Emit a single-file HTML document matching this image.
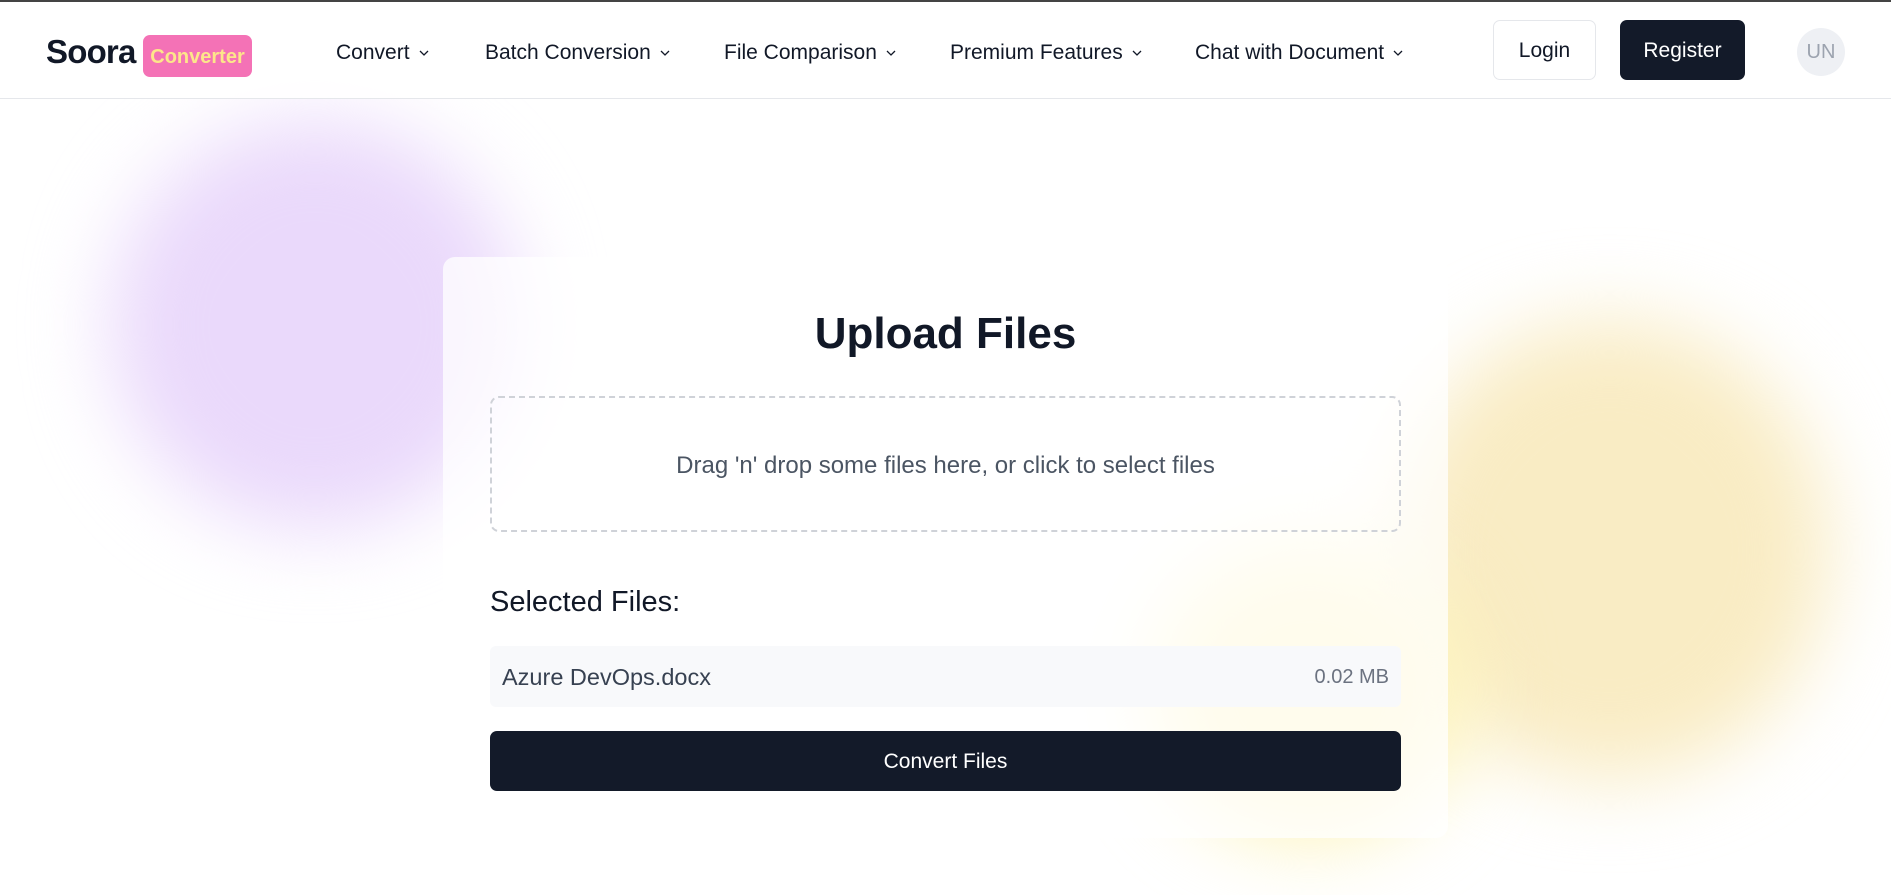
<!DOCTYPE html>
<html><head><meta charset="utf-8"><style>
*{box-sizing:border-box;margin:0;padding:0}
body{width:1891px;height:895px;overflow:hidden;background:#fff;font-family:"Liberation Sans",sans-serif;color:#111827;position:relative}
.topbar{position:absolute;left:0;top:0;width:100%;height:2px;background:#444}
.blob{position:absolute;border-radius:50%;filter:blur(40px)}
header{position:absolute;top:2px;left:0;width:100%;height:97px;border-bottom:1px solid #e5e7eb;background:rgba(255,255,255,.85);z-index:5}
.logo{position:absolute;left:46px;top:31px;font-size:33px;font-weight:bold;color:#111827;letter-spacing:-0.8px}
.badge{position:absolute;left:143px;top:33px;width:109px;height:42px;background:#f472b6;border-radius:7px;color:#fde68a;font-size:20px;font-weight:bold;text-align:center;line-height:44px}
.nav{position:absolute;top:39px;font-size:21px;color:#111827}
.nav svg{vertical-align:middle;margin-left:8px}
.btn{position:absolute;top:18px;height:60px;border-radius:7px;font-size:21px;line-height:62px;text-align:center}
.un{position:absolute;left:1797px;top:26px;width:48px;height:48px;border-radius:50%;background:#eef0f4;color:#9ca3af;font-size:20px;line-height:48px;text-align:center}
.card{position:absolute;left:443px;top:257px;width:1005px;height:581px;background:rgba(255,255,255,.75);border-radius:12px;z-index:3}
h1{position:absolute;left:0;width:100%;top:52px;text-align:center;font-size:44px;font-weight:bold}
.drop{position:absolute;left:47px;top:139px;width:911px;height:136px;border:2px dashed #cfd2d8;border-radius:9px;text-align:center;line-height:136px;font-size:24px;color:#4b5563}
.sel{position:absolute;left:47px;top:329px;font-size:29px;color:#111827}
.row{position:absolute;left:47px;top:389px;width:911px;height:61px;background:#f8f9fb;border-radius:6px;font-size:23.5px;line-height:63px;padding:0 12px;color:#374151}
.row span{float:right;font-size:20px;color:#6b7280}
.conv{position:absolute;left:47px;top:474px;width:911px;height:60px;background:#131a29;border-radius:7px;color:#fff;font-size:21px;text-align:center;line-height:62px}
</style></head><body>
<div class="topbar"></div>
<div class="blob" style="left:110px;top:120px;width:410px;height:410px;background:#ead9fb"></div>
<div class="blob" style="left:1390px;top:320px;width:440px;height:460px;background:#f9ecc4"></div>
<div class="blob" style="left:1150px;top:540px;width:320px;height:300px;background:#fdf3b8"></div>
<header>
<div class="logo">Soora</div>
<div class="badge">Converter</div>
<div class="nav" style="left:336px">Convert<svg width="12" height="8" viewBox="0 0 12 8"><path d="M2 2l4 4 4-4" fill="none" stroke="#111827" stroke-width="1.3"/></svg></div>
<div class="nav" style="left:485px">Batch Conversion<svg width="12" height="8" viewBox="0 0 12 8"><path d="M2 2l4 4 4-4" fill="none" stroke="#111827" stroke-width="1.3"/></svg></div>
<div class="nav" style="left:724px">File Comparison<svg width="12" height="8" viewBox="0 0 12 8"><path d="M2 2l4 4 4-4" fill="none" stroke="#111827" stroke-width="1.3"/></svg></div>
<div class="nav" style="left:950px">Premium Features<svg width="12" height="8" viewBox="0 0 12 8"><path d="M2 2l4 4 4-4" fill="none" stroke="#111827" stroke-width="1.3"/></svg></div>
<div class="nav" style="left:1195px">Chat with Document<svg width="12" height="8" viewBox="0 0 12 8"><path d="M2 2l4 4 4-4" fill="none" stroke="#111827" stroke-width="1.3"/></svg></div>
<div class="btn" style="left:1493px;width:103px;border:1px solid #e5e7eb;color:#111827;background:#fff;line-height:60px">Login</div>
<div class="btn" style="left:1620px;width:125px;background:#131a29;color:#fff">Register</div>
<div class="un">UN</div>
</header>
<div class="card">
<h1>Upload Files</h1>
<div class="drop">Drag 'n' drop some files here, or click to select files</div>
<div class="sel">Selected Files:</div>
<div class="row">Azure DevOps.docx<span>0.02 MB</span></div>
<div class="conv">Convert Files</div>
</div>
</body></html>
